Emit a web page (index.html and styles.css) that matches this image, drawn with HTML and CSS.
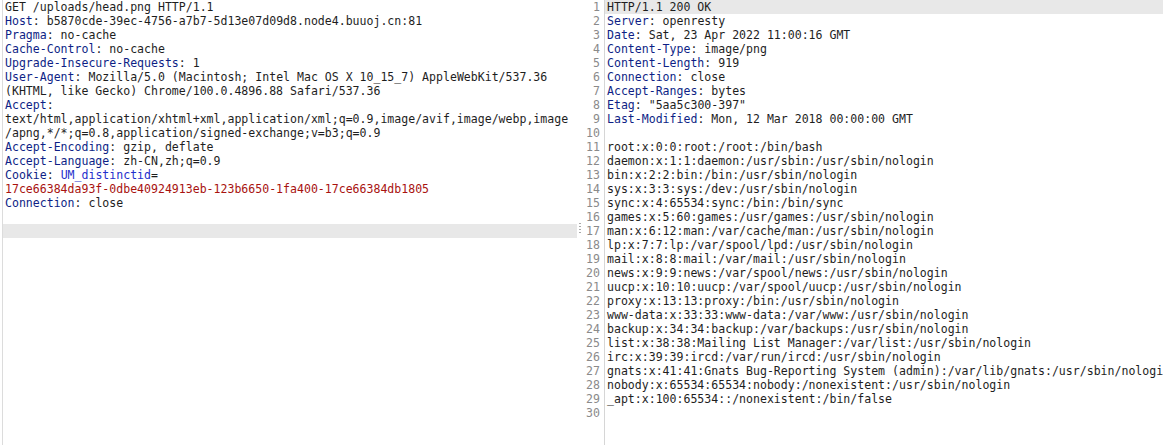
FILE: index.html
```html
<!DOCTYPE html>
<html lang="en">
<head>
    <meta charset="UTF-8">
    <title>Request / Response</title>
    <link rel="stylesheet" href="styles.css">
</head>
<body>
    <div class="viewer">
        <div class="pane request">
            <div class="line"><span>GET /uploads/head.png HTTP/1.1</span></div>
            <div class="line"><span class="hk">Host</span>: b5870cde-39ec-4756-a7b7-5d13e07d09d8.node4.buuoj.cn:81</div>
            <div class="line"><span class="hk">Pragma</span>: no-cache</div>
            <div class="line"><span class="hk">Cache-Control</span>: no-cache</div>
            <div class="line"><span class="hk">Upgrade-Insecure-Requests</span>: 1</div>
            <div class="line"><span class="hk">User-Agent</span>: Mozilla/5.0 (Macintosh; Intel Mac OS X 10_15_7) AppleWebKit/537.36</div>
            <div class="line">(KHTML, like Gecko) Chrome/100.0.4896.88 Safari/537.36</div>
            <div class="line"><span class="hk">Accept</span>:</div>
            <div class="line">text/html,application/xhtml+xml,application/xml;q=0.9,image/avif,image/webp,image</div>
            <div class="line">/apng,*/*;q=0.8,application/signed-exchange;v=b3;q=0.9</div>
            <div class="line"><span class="hk">Accept-Encoding</span>: gzip, deflate</div>
            <div class="line"><span class="hk">Accept-Language</span>: zh-CN,zh;q=0.9</div>
            <div class="line"><span class="hk">Cookie</span>: <span class="ck">UM_distinctid</span>=</div>
            <div class="line"><span class="cv">17ce66384da93f-0dbe40924913eb-123b6650-1fa400-17ce66384db1805</span></div>
            <div class="line"><span class="hk">Connection</span>: close</div>
            <div class="line"> </div>
            <div class="line current"> </div>
        </div>

        <div class="divider"><div class="grip"></div></div>

        <div class="pane response">
            <div class="gutter" id="gutter"></div>
            <div class="code">
                <div class="line current">HTTP/1.1 200 OK</div>
                <div class="line"><span class="hk">Server</span>: openresty</div>
                <div class="line"><span class="hk">Date</span>: Sat, 23 Apr 2022 11:00:16 GMT</div>
                <div class="line"><span class="hk">Content-Type</span>: image/png</div>
                <div class="line"><span class="hk">Content-Length</span>: 919</div>
                <div class="line"><span class="hk">Connection</span>: close</div>
                <div class="line"><span class="hk">Accept-Ranges</span>: bytes</div>
                <div class="line"><span class="hk">Etag</span>: "5aa5c300-397"</div>
                <div class="line"><span class="hk">Last-Modified</span>: Mon, 12 Mar 2018 00:00:00 GMT</div>
                <div class="line"> </div>
                <div class="line">root:x:0:0:root:/root:/bin/bash</div>
                <div class="line">daemon:x:1:1:daemon:/usr/sbin:/usr/sbin/nologin</div>
                <div class="line">bin:x:2:2:bin:/bin:/usr/sbin/nologin</div>
                <div class="line">sys:x:3:3:sys:/dev:/usr/sbin/nologin</div>
                <div class="line">sync:x:4:65534:sync:/bin:/bin/sync</div>
                <div class="line">games:x:5:60:games:/usr/games:/usr/sbin/nologin</div>
                <div class="line">man:x:6:12:man:/var/cache/man:/usr/sbin/nologin</div>
                <div class="line">lp:x:7:7:lp:/var/spool/lpd:/usr/sbin/nologin</div>
                <div class="line">mail:x:8:8:mail:/var/mail:/usr/sbin/nologin</div>
                <div class="line">news:x:9:9:news:/var/spool/news:/usr/sbin/nologin</div>
                <div class="line">uucp:x:10:10:uucp:/var/spool/uucp:/usr/sbin/nologin</div>
                <div class="line">proxy:x:13:13:proxy:/bin:/usr/sbin/nologin</div>
                <div class="line">www-data:x:33:33:www-data:/var/www:/usr/sbin/nologin</div>
                <div class="line">backup:x:34:34:backup:/var/backups:/usr/sbin/nologin</div>
                <div class="line">list:x:38:38:Mailing List Manager:/var/list:/usr/sbin/nologin</div>
                <div class="line">irc:x:39:39:ircd:/var/run/ircd:/usr/sbin/nologin</div>
                <div class="line">gnats:x:41:41:Gnats Bug-Reporting System (admin):/var/lib/gnats:/usr/sbin/nologin</div>
                <div class="line">nobody:x:65534:65534:nobody:/nonexistent:/usr/sbin/nologin</div>
                <div class="line">_apt:x:100:65534::/nonexistent:/bin/false</div>
                <div class="line"> </div>
            </div>
        </div>
    </div>

    <script>
        // line numbers for the response editor
        let gutter = document.getElementById("gutter");
        let count = document.querySelectorAll(".response .code .line").length;
        for (let i = 1; i <= count; i++) {
            gutter.innerHTML += `<div class="num">${i}</div>`;
        }
    </script>
</body>
</html>
```

FILE: styles.css
```css
body {
    margin: 0;
    background: #fff;
    font-family: "DejaVu Sans Mono", "Liberation Mono", monospace;
    font-size: 11.55px;
    color: #1e1e1e;
    overflow: hidden;
}
.viewer {
    display: flex;
    height: 445px;
}
.pane {
    overflow: hidden;
}
.line {
    height: 14px;
    line-height: 14px;
    white-space: pre;
}
.request {
    width: 574px;
    margin-left: 2px;
    border-left: 1px solid #dcdcdc;
}
.request .line {
    padding-left: 2px;
}
.current {
    background-color: #e8e8e8;
}
.hk {
    color: #0e1f86;
}
.ck {
    color: #1f2fcc;
}
.cv {
    color: #a8120f;
}
.divider {
    width: 6px;
    flex-shrink: 0;
}
.grip {
    margin-top: 222px;
    margin-left: 2px;
    width: 2px;
    height: 11px;
    background-image: radial-gradient(circle, #a9a9a9 0.9px, transparent 1.1px);
    background-size: 2px 3px;
}
.response {
    flex: 1;
    display: flex;
}
.gutter {
    width: 17px;
    padding-right: 4px;
    border-right: 1px solid #d6d6d6;
    text-align: right;
    color: #8a8a8a;
}
.num {
    height: 14px;
    line-height: 14px;
}
.code {
    flex: 1;
    overflow: hidden;
}
.code .line {
    padding-left: 2px;
}
```
